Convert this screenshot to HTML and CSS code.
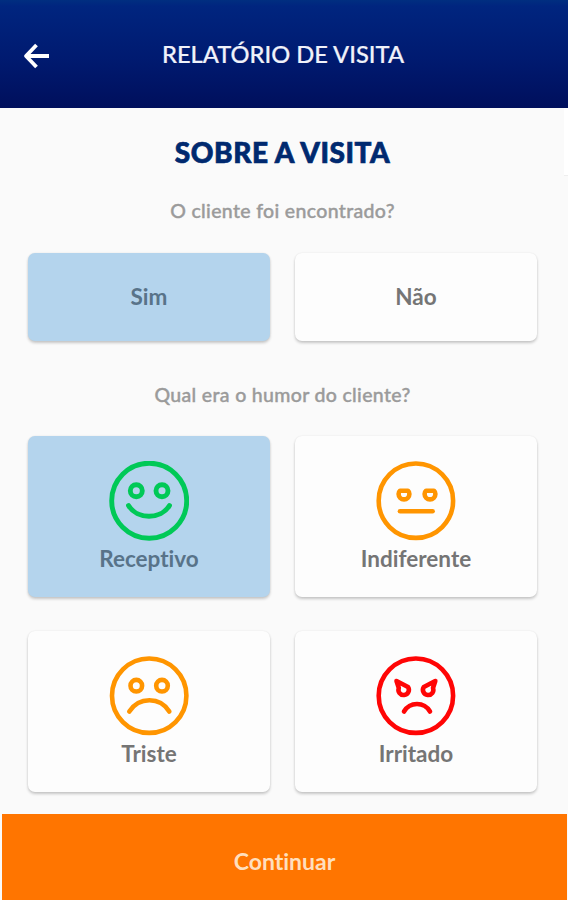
FILE: index.html
```html
<!DOCTYPE html>
<html lang="pt-BR">
<head>
	<meta charset="utf-8">
	<title>Relatório de Visita</title>
	<link rel="stylesheet" href="styles.css">
</head>
<body>
	<header class="topbar">
		<svg class="back" viewBox="0 0 28 28">
			<path d="M14.5 3 L4 14 L14.5 25 M4.5 14 H27"/>
		</svg>
		<h1>RELATÓRIO DE VISITA</h1>
	</header>

	<main class="content">
		<h2>SOBRE A VISITA</h2>
		<p class="question">O cliente foi encontrado?</p>
		<div class="options answers">
			<div class="card selected">Sim</div>
			<div class="card">Não</div>
		</div>

		<p class="question">Qual era o humor do cliente?</p>
		<div class="options moods">
			<div class="card selected">
				<svg class="face green" viewBox="0 0 80 80">
					<circle cx="40.2" cy="39.7" r="37.5"/>
					<circle cx="27.3" cy="29.7" r="6"/>
					<circle cx="53" cy="29.7" r="6"/>
					<path d="M19.5 44.5 C28 58.8 52 58.8 60.5 44.5"/>
				</svg>
				<span>Receptivo</span>
			</div>
			<div class="card">
				<svg class="face orange" viewBox="0 0 80 80">
					<circle cx="39.9" cy="39.7" r="37.2"/>
					<path d="M24 29.8 H32 Q33.4 31 33.4 33 A5.4 5.4 0 0 1 22.6 33 Q22.6 31 24 29.8 Z"/>
					<path d="M50 29.8 H58 Q59.4 31 59.4 33 A5.4 5.4 0 0 1 48.6 33 Q48.6 31 50 29.8 Z"/>
					<path d="M24 50.3 H56.6"/>
				</svg>
				<span>Indiferente</span>
			</div>
			<div class="card">
				<svg class="face orange" viewBox="0 0 80 80">
					<circle cx="40.2" cy="39.7" r="37.2"/>
					<circle cx="27.3" cy="29.7" r="5.8"/>
					<circle cx="53" cy="29.7" r="5.8"/>
					<path d="M20.3 55.5 C30 40.5 51 40.5 60.3 55.5"/>
				</svg>
				<span>Triste</span>
			</div>
			<div class="card">
				<svg class="face red" viewBox="0 0 80 80">
					<circle cx="39.9" cy="39.7" r="37.2"/>
					<path d="M20.5 25 L32 31 A5.2 5.2 0 1 1 22.8 32 Z"/>
					<path d="M59.3 25 L47.8 31 A5.2 5.2 0 1 0 57 32 Z"/>
					<path d="M28 55.5 C34 45.5 48 45.5 54 55.5"/>
				</svg>
				<span>Irritado</span>
			</div>
		</div>
		<div class="scrollbar"></div>
	</main>

	<button class="continue">Continuar</button>
</body>
</html>
```
FILE: styles.css
```css
* {
	box-sizing: border-box;
}

body {
	margin: 0;
	height: 900px;
	display: flex;
	flex-direction: column;
	overflow: hidden;
	background: #fafafa;
	font-family: Lato, "Open Sans", sans-serif;
	font-variant-ligatures: none;
}

h1, h2, p {
	margin: 0;
}

.topbar {
	height: 108px;
	display: grid;
	grid-template-columns: 60px 1fr 60px;
	align-items: center;
	padding: 3px 2px 0 0;
	background: linear-gradient(#002e80 0, #00257f 6px, #001a70 55%, #000f5c);
	color: #f0f2fa;
}

.back {
	width: 28px;
	height: 28px;
	margin-left: 22px;
	fill: none;
	stroke: #fff;
	stroke-width: 3.8;
	stroke-linejoin: round;
}

.topbar h1 {
	text-align: center;
	font-size: 23.7px;
	font-weight: 500;
	line-height: 30px;
	padding-bottom: 3px;
	white-space: nowrap;
	-webkit-text-stroke: 0.2px #f0f2fa;
}

.content {
	position: relative;
	height: 706px;
	padding: 28px 31px 0 28px;
}

.content h2 {
	text-align: center;
	font-size: 28px;
	font-weight: 900;
	line-height: 32px;
	letter-spacing: 0.55px;
	color: #00296f;
	-webkit-text-stroke: 0.7px #00296f;
}

.question {
	text-align: center;
	font-size: 19.5px;
	font-weight: 500;
	line-height: 24px;
	letter-spacing: 0.33px;
	color: #9b9b9b;
	margin-top: 31px;
	-webkit-text-stroke: 0.4px #9b9b9b;
}

.options {
	display: grid;
	grid-template-columns: 242px 242px;
	column-gap: 25px;
	row-gap: 34px;
}

.answers {
	margin-top: 30px;
	grid-auto-rows: 88px;
	margin-bottom: 42px;
}

.moods {
	margin-top: 29px;
	grid-auto-rows: 161px;
}

.card {
	display: flex;
	flex-direction: column;
	align-items: center;
	justify-content: center;
	padding-bottom: 1px;
	border-radius: 7px;
	background: #fdfdfd;
	box-shadow: 0 2px 3px rgba(0, 0, 0, 0.2), 0 0 2px rgba(0, 0, 0, 0.08);
	color: #757575;
	font-size: 22.5px;
	font-weight: 700;
	line-height: 28px;
}

.card.selected {
	background: #b4d4ed;
	color: #587389;
}

.moods .card {
	justify-content: flex-start;
	padding-top: 25px;
}

.face {
	width: 80px;
	height: 80px;
	margin-bottom: 4px;
	fill: none;
	stroke-width: 4.6;
	stroke-linecap: round;
	stroke-linejoin: round;
}

.green {
	stroke: #00c957;
	stroke-width: 4.9;
}

.orange {
	stroke: #ff9500;
}

.red {
	stroke: #ff0505;
}

.scrollbar {
	position: absolute;
	top: 0;
	right: 0;
	width: 4px;
	height: 68px;
	background: #fff;
	border-bottom: 1px solid #eee;
}

.continue {
	flex: 1;
	margin: 0 1px 0 2px;
	padding: 7px 0 0;
	border: 0;
	background: #ff7500;
	color: #ffdfbd;
	font-family: inherit;
	font-variant-ligatures: none;
	font-size: 23px;
	font-weight: 700;
}
```
